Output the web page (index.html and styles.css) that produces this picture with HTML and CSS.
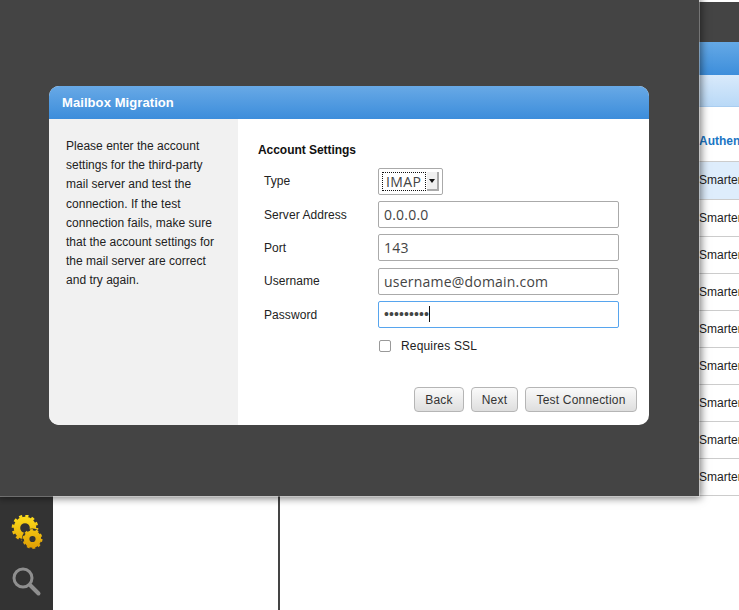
FILE: index.html
```html
<!DOCTYPE html>
<html lang="en">
<head>
<meta charset="utf-8">
<title>Mailbox Migration</title>
<link rel="stylesheet" href="styles.css">
</head>
<body>
<div class="app">
  <aside class="sidebar">
    <svg class="icon-gears" width="32" height="37" viewBox="0 0 32 37">
      <defs>
        <linearGradient id="gold" gradientUnits="userSpaceOnUse" x1="0" y1="0" x2="0" y2="37">
          <stop offset="0" stop-color="#ffdf1c"/>
          <stop offset="1" stop-color="#dc9600"/>
        </linearGradient>
      </defs>
      <circle cx="14" cy="13" r="8" fill="none" stroke="url(#gold)" stroke-width="6.4"/>
      <circle cx="14" cy="13" r="12" fill="none" stroke="url(#gold)" stroke-width="2.6" stroke-dasharray="3.14 3.14"/>
      <circle cx="21.5" cy="24" r="10.6" fill="#333"/>
      <circle cx="21.5" cy="24" r="5.9" fill="none" stroke="url(#gold)" stroke-width="5.6"/>
      <circle cx="21.5" cy="24" r="9" fill="none" stroke="url(#gold)" stroke-width="2" stroke-dasharray="2.83 2.83"/>
    </svg>
    <svg class="icon-search" width="32" height="32" viewBox="0 0 32 32">
      <circle cx="12" cy="12" r="9" fill="none" stroke="#8f8f8f" stroke-width="3"/>
      <path d="M19.5 19.5 L27.5 27.5" stroke="#8f8f8f" stroke-width="4" stroke-linecap="round"/>
    </svg>
  </aside>
  <div class="tree-pane"></div>
  <main class="main">
    <div class="topbar"></div>
    <div class="bluebar"></div>
    <div class="subbar"></div>
    <div class="table-head">Authentication</div>
    <div class="row row-alt">SmarterMail</div>
    <div class="row">SmarterMail</div>
    <div class="row">SmarterMail</div>
    <div class="row">SmarterMail</div>
    <div class="row">SmarterMail</div>
    <div class="row">SmarterMail</div>
    <div class="row">SmarterMail</div>
    <div class="row">SmarterMail</div>
    <div class="row">SmarterMail</div>
  </main>
</div>

<div class="overlay">
  <section class="dialog">
    <header class="dialog-title">Mailbox Migration</header>
    <div class="dialog-body">
      <p class="intro">Please enter the account settings for the third-party mail server and test the connection. If the test connection fails, make sure that the account settings for the mail server are correct and try again.</p>
      <div class="content">
        <h2 class="section-title">Account Settings</h2>
        <div class="form">
          <label class="label label-type">Type</label>
          <div class="select"><span class="select-value">IMAP</span><span class="select-arrow"></span></div>
          <label class="label">Server Address</label>
          <input class="field" type="text" value="0.0.0.0">
          <label class="label">Port</label>
          <input class="field" type="text" value="143">
          <label class="label">Username</label>
          <input class="field" type="text" value="username@domain.com">
          <label class="label label-password">Password</label>
          <div class="field field-focus"><span class="dots">•••••••••</span><span class="caret"></span></div>
          <span></span>
          <label class="check"><span class="checkbox"></span>Requires SSL</label>
        </div>
        <div class="actions">
          <button class="btn btn-back" type="button">Back</button>
          <button class="btn btn-next" type="button">Next</button>
          <button class="btn btn-test" type="button">Test Connection</button>
        </div>
      </div>
    </div>
  </section>
</div>
</body>
</html>
```
FILE: styles.css
```css
* { box-sizing: border-box; }
html, body { margin: 0; height: 100%; overflow: hidden; }
body { font-family: "Liberation Sans", Arial, sans-serif; font-size: 12px; color: #222; background: #fff; position: relative; }

.app { display: flex; height: 610px; }
.sidebar { width: 53px; background: #333; display: flex; flex-direction: column; align-items: center; justify-content: flex-end; gap: 14px; padding-bottom: 12px; }
.icon-gears { display: block; }
.icon-search { display: block; }
.tree-pane { width: 227px; border-right: 2px solid #444; background: #fff; }
.main { flex: 1; padding-top: 2px; overflow: hidden; white-space: nowrap; }
.topbar { height: 40px; background: #444; }
.bluebar { height: 33px; background: linear-gradient(#65a9e6, #3d8edb); }
.subbar { height: 32px; background: linear-gradient(#d9eafb, #b9d9f7); border-bottom: 1px solid #a9cdf0; }
.table-head { height: 55px; padding: 27px 0 0 419px; font-weight: bold; color: #1a75c4; font-size: 12px; line-height: 14px; border-bottom: 1px solid #ccc; }
.row { height: 37px; padding-left: 419px; line-height: 36px; border-bottom: 1px solid #ccc; }
.row-alt { height: 38px; background: #deedfc; }

.overlay { position: absolute; left: 0; top: 0; width: 699px; height: 496px; background: #444; padding: 86px 50px 0 49px; box-shadow: 0 0 8px 2px rgba(0,0,0,.55); outline: 1px solid rgba(255,255,255,.35); }
.dialog { height: 339px; background: #fff; border-radius: 10px; overflow: hidden; display: flex; flex-direction: column; }
.dialog-title { height: 33px; padding-left: 13px; background: linear-gradient(#68a9e6, #3c8ddb); color: #fff; font-weight: bold; font-size: 13px; line-height: 33px; letter-spacing: .08px; }
.dialog-body { flex: 1; display: flex; }
.intro { width: 189px; margin: 0; padding: 18px 17px 0; background: #f1f1f1; line-height: 19.2px; letter-spacing: .02px; color: #222; }
.content { flex: 1; padding: 24px 12px 0 20px; display: flex; flex-direction: column; }
.section-title { margin: 0; font-size: 12px; line-height: 14px; letter-spacing: -.05px; color: #111; }
.form { display: grid; grid-template-columns: 120px 241px; row-gap: 6.24px; margin-top: 11px; align-items: center; }
.label { padding-left: 6px; line-height: 14px; letter-spacing: .06px; }
.label-type { margin-bottom: 1px; }
.label-password { margin-top: 1px; }
.select { width: 65px; height: 27px; border: 1px solid #aaa; border-radius: 2px; padding: 3px; display: flex; align-items: stretch; font-size: 14px; letter-spacing: .4px; color: #444; font-family: "Open Sans", sans-serif; }
.select-value { flex: 1; border: 1px dotted #111; padding-left: 3px; line-height: 17px; margin-right: 1px; }
.select-arrow { width: 12px; border-right: 2px solid #aaa; border-bottom: 2px solid #aaa; position: relative; background: #f0f0f0; }
.select-arrow::after { content: ""; position: absolute; left: 2px; top: 7px; border: 3px solid transparent; border-top: 4px solid #111; border-bottom: 0; }
.field { display: flex; align-items: center; width: 241px; height: 27px; margin: 0; padding: 0 5px; border: 1px solid #aaa; border-radius: 2px; background: #fff; font-family: "Open Sans", sans-serif; font-size: 14px; letter-spacing: .21px; color: #444; outline: none; }
.field-focus { border-color: #57a5ee; }
.dots { font-family: "Liberation Sans", sans-serif; font-size: 14px; letter-spacing: .1px; color: #444; }
.caret { width: 1px; height: 16px; background: #111; }
.check { grid-column: 2; display: flex; align-items: center; gap: 10px; padding-left: 1px; height: 18px; margin-top: 3px; letter-spacing: .17px; }
.checkbox { width: 12px; height: 12px; border: 1px solid #999; border-radius: 2px; background: #fff; }
.actions { margin-top: auto; display: flex; justify-content: flex-end; gap: 7px; padding-bottom: 13px; }
.btn { height: 25px; padding: 0; border: 1px solid #b5b5b5; border-radius: 4px; background: linear-gradient(#fafafa, #dedede); font-family: "Liberation Sans", sans-serif; font-size: 12px; letter-spacing: .2px; color: #333; }
.btn-back { width: 50px; }
.btn-next { width: 47px; }
.btn-test { width: 112px; }
```
